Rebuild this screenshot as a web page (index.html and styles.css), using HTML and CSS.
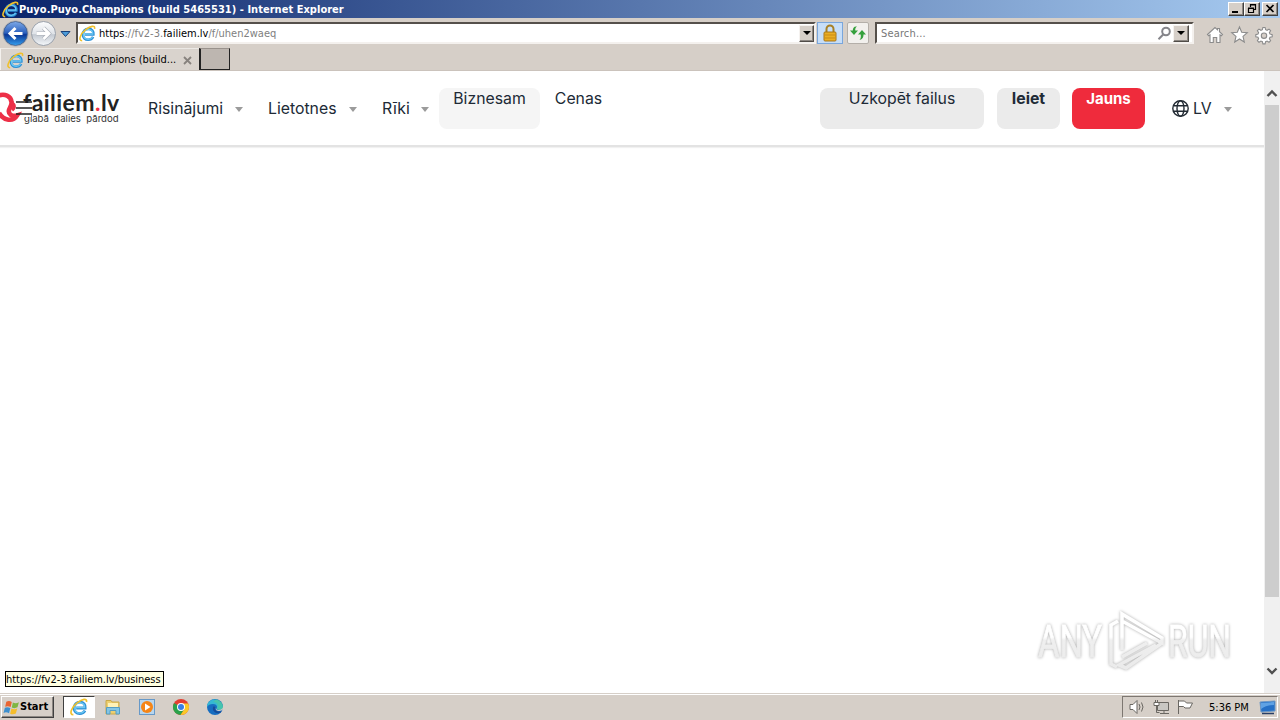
FILE: index.html
```html
<!DOCTYPE html>
<html lang="lv">
<head>
<meta charset="utf-8">
<title>Puyo.Puyo.Champions (build 5465531)</title>
<link rel="stylesheet" href="styles.css">
</head>
<body>
<svg class="defs" width="0" height="0">
  <linearGradient id="orb" x1="0" y1="0" x2="0" y2="1"><stop offset="0" stop-color="#7da9e8"/><stop offset=".48" stop-color="#2b60bd"/><stop offset=".55" stop-color="#0b3796"/><stop offset="1" stop-color="#35a0ef"/></linearGradient>
  <linearGradient id="orb2" x1="0" y1="0" x2="0" y2="1"><stop offset="0" stop-color="#fdfdfe"/><stop offset=".5" stop-color="#dfe3e8"/><stop offset=".55" stop-color="#c4cad2"/><stop offset="1" stop-color="#f5f8fb"/></linearGradient>
  <linearGradient id="mark" gradientUnits="userSpaceOnUse" x1="0" y1="6" x2="0" y2="60"><stop offset="0" stop-color="#fff"/><stop offset=".5" stop-color="#fff"/><stop offset=".56" stop-color="#efefef"/><stop offset="1" stop-color="#ebebeb"/></linearGradient>
  <symbol id="ie" viewBox="0 0 16 16">
    <path d="M13.300 11.200C12.300 13 10.600 13.900 8.600 13.900C5.600 13.900 3.700 11.900 3.700 9C3.700 5.800 5.900 3.700 8.900 3.700C12.200 3.700 13.900 5.900 13.500 8.900H5.500" fill="none" stroke="#2b8fd6" stroke-width="2.500"/>
    <path d="M12.800 11.500C11.800 13 10.400 13.500 8.600 13.500C6 13.500 4.200 11.600 4.200 9C4.200 6 6.300 4.100 8.900 4.100C11.700 4.100 13.200 6 13 8.500H5.500" fill="none" stroke="#6cc8f3" stroke-width="1.200"/>
    <path d="M3 14.800C-1 15 1 8.500 6.300 4.400C10.700 1 15.500-.3 14.600 3.600" fill="none" stroke="#f0c02c" stroke-width="1.500"/>
  </symbol>
</svg>
<div class="screen">
  <div class="titlebar">
    <svg class="ti" width="17" height="17"><use href="#ie"/></svg>
    <span class="title">Puyo.Puyo.Champions (build 5465531) - Internet Explorer</span>
    <div class="winbtns">
      <span class="wb"><svg width="14" height="12"><path d="M3 9h6" stroke="#000" stroke-width="2"/></svg></span>
      <span class="wb"><svg width="14" height="12"><path d="M5.500 4V1.500h5V6.500H9M5 2h6M3.500 5.500h5v4h-5zM3 5h6" fill="none" stroke="#000" stroke-width="1.200"/></svg></span>
      <span class="wb close"><svg width="14" height="12"><path d="M3.500 2l7 7M10.500 2l-7 7" stroke="#000" stroke-width="1.700"/></svg></span>
    </div>
  </div>

  <div class="toolbar">
    <svg class="orbs" width="75" height="30" viewBox="0 0 75 30">
      <circle cx="15.500" cy="15.500" r="12" fill="url(#orb)" stroke="#42618f"/>
      <circle cx="15.500" cy="15.500" r="12.800" fill="none" stroke="#aaa9ad" stroke-width=".7"/>
      <path d="M22.500 15.500H10.500M15.500 10L10 15.500l5.500 5.500" fill="none" stroke="#fff" stroke-width="3"/>
      <circle cx="43.500" cy="15.500" r="12" fill="url(#orb2)" stroke="#99a0aa"/>
      <path d="M36.500 15.500h12M43.500 10l5.500 5.500l-5.500 5.500" fill="none" stroke="#a9afb8" stroke-width="4"/>
      <path d="M36.500 15.500h12M43.500 10l5.500 5.500l-5.500 5.500" fill="none" stroke="#fff" stroke-width="2.800"/>
      <path d="M61 13.500h9l-4.500 5z" fill="#4b9bd8" stroke="#183f78"/>
    </svg>
    <div class="address">
      <svg width="17" height="17"><use href="#ie"/></svg>
      <span class="url"><b>https</b>://fv2-3.<b>failiem.lv</b>/f/uhen2waeq</span>
      <span class="drop"><i></i></span>
    </div>
    <div class="lock"><svg width="16" height="18"><path d="M4.500 9V5a3.500 3.500 0 0 1 7 0v4" fill="none" stroke="#a88025" stroke-width="2"/><rect x="2" y="8" width="12" height="9" rx="1" fill="#eaae25" stroke="#a8771b"/><path d="M3 11h10M3 14h10" stroke="#c98b17"/></svg></div>
    <div class="refresh"><svg width="18" height="16" fill="#35a03c"><path d="M8 1.500C5 1 3.800 3 3.800 5.500H1L5 10L9 5.500H6.300C6 4 6.500 2.500 8 1.500z"/><path d="M10.500 15C13.500 14.500 14.700 12 14.500 9.500H17L13 5L9 9.500H11.700C12 11.500 12 13.500 10.500 15z"/></svg></div>
    <div class="search">
      <span class="ph">Search...</span>
      <svg width="15" height="15" fill="none" stroke="#85858a" stroke-width="2"><circle cx="9" cy="5.500" r="3.800"/><path d="M6.200 8.500L1.500 13.200"/></svg>
      <span class="drop"><i></i></span>
    </div>
    <svg class="tools" width="68" height="20" fill="#fff" stroke="#8b8b8b" stroke-width="1.100">
      <path d="M1.500 9.500L9 2.500l2.500 2.300V3.500h2v3.200l3 2.800l-1.200 1.300l-1.300-1V17.500H10.700v-5H7.300v5H4V9.800l-1.300 1z"/>
      <path d="M33.500 2l2.200 5.200l5.600.5l-4.300 3.700l1.300 5.600l-4.800-3l-4.800 3l1.300-5.600l-4.300-3.700l5.600-.5z"/>
      <path d="M56.900 2.500h2.200l.5 2.200l1.500.6l1.900-1.200l1.600 1.600l-1.200 1.900l.6 1.500l2.200.5v2.200l-2.200.5l-.6 1.500l1.200 1.900l-1.600 1.600l-1.900-1.200l-1.500.6l-.5 2.200h-2.200l-.5-2.200l-1.500-.6l-1.900 1.200l-1.600-1.600l1.200-1.900l-.6-1.500l-2.200-.5V9.600l2.200-.5l.6-1.500l-1.200-1.900l1.600-1.600l1.900 1.200l1.500-.6z"/><circle cx="58" cy="10.700" r="2.700" fill="#d6cfc8"/>
    </svg>
  </div>

  <div class="tabs">
    <div class="tab"><svg width="17" height="17"><use href="#ie"/></svg><span class="tabname">Puyo.Puyo.Champions (build...</span><svg class="x" width="9" height="9"><path d="M1 1l7 7M8 1L1 8" stroke="#87827e" stroke-width="1.800"/></svg></div>
    <div class="newtab"></div>
  </div>

  <div class="viewport">
    <div class="page">
      <header class="site">
        <div class="logo">
          <svg class="infinity" width="38" height="34" viewBox="0 0 38 34" fill="none"><path d="M16 12h15v14H16z" fill="#fff"/><path d="M-3 5C5 2 11 5 11.500 11C12 14 10 16 9 19C8 23 12 26 17 24.500C13 31 4 30-1 22" stroke="#ed2f47" stroke-width="4.600"/><path d="M11 12C15 13 15 17 12 19" stroke="#ed2f47" stroke-width="3.500"/><path d="M16 11H32M16 17H32M16 23H32" stroke="#222" stroke-width="1.700"/></svg>
          <div class="brand"><span class="name">failiem<em>.</em>lv</span><span class="tag">glabā&nbsp; dalies&nbsp; pārdod</span></div>
        </div>
        <nav class="nav">
          <a class="item i1"><span>Risinājumi</span><i class="car"></i></a>
          <a class="item i2"><span>Lietotnes</span><i class="car"></i></a>
          <a class="item i3"><span>Rīki</span><i class="car"></i></a>
          <a class="btn biz">Biznesam</a>
          <a class="btn cen">Cenas</a>
        </nav>
        <div class="actions">
          <a class="btn up">Uzkopēt failus</a>
          <a class="btn login">Ieiet</a>
          <a class="btn join">Jauns</a>
          <a class="item lang"><svg width="18" height="18" fill="none" stroke="#222a33" stroke-width="1.400"><circle cx="9.500" cy="8.500" r="7.700"/><ellipse cx="9.500" cy="8.500" rx="3.500" ry="7.700"/><path d="M2.500 5.800h14M2.500 11.200h14"/></svg><span>LV</span><i class="car"></i></a>
        </div>
      </header>
      <svg class="watermark" width="210" height="72" viewBox="0 0 210 72">
        <text x="4" y="53" textLength="64" lengthAdjust="spacingAndGlyphs">ANY</text>
        <text x="134" y="53" textLength="63" lengthAdjust="spacingAndGlyphs">RUN</text>
        <path d="M84 17L77 21V60L83 63M88 46V10L128 34V39L88 17M128 39L92 64L85 61L122 41M88 53L113 39" fill="none" stroke="url(#mark)" stroke-width="3.600"/>
      </svg>
      <div class="status">https://fv2-3.failiem.lv/business</div>
    </div>
    <div class="scroll">
      <svg width="16" height="34"><path d="M3.500 25L8 20.500L12.500 25" fill="none" stroke="#505050" stroke-width="2.400"/></svg>
      <div class="thumb"></div>
      <svg class="down" width="16" height="34"><path d="M3.500 9.500L8 14L12.500 9.500" fill="none" stroke="#505050" stroke-width="2.400"/></svg>
    </div>
  </div>

  <div class="taskbar">
    <div class="start"><svg width="17" height="17" viewBox="0 0 15.500 15.500"><path d="M3 2.500Q5.500 1 8 2.700L7 7.300Q4.500 6 2 7z" fill="#e96532"/><path d="M9 3.200Q11.500 4.500 14.500 3L13.200 7.600Q10.500 9 8 7.700z" fill="#7fb642"/><path d="M1.700 8Q4 7 6.700 8.300L5.500 13Q3 11.500.5 12.700z" fill="#3d8fce"/><path d="M7.700 8.700Q10.500 10 13 8.600L11.700 13.300Q9 14.500 6.500 13.500z" fill="#f5bd2b"/></svg><span>Start</span></div>
    <div class="apps">
      <span class="active"><svg width="18" height="18"><use href="#ie"/></svg></span>
      <svg width="18" height="18"><path d="M2 2.500h5l1 1.500h7v12H2z" fill="#edcf70" stroke="#c9a849"/><path d="M4 5h10v4H4z" fill="#fff2b7"/><path d="M2.500 16V9.500h13V16h-3.500v-3.500h-6V16z" fill="#83c5e5" stroke="#549dc4"/></svg>
      <svg width="18" height="18"><rect x="1.500" y="1.500" width="15" height="15" fill="#b8d6ee" stroke="#6799c8"/><circle cx="9" cy="9" r="6" fill="#f58517"/><path d="M7 5.500l5.500 3.500L7 12.500z" fill="#fff"/></svg>
      <svg width="18" height="18"><circle cx="9" cy="9" r="8" fill="#e33e31"/><path d="M9 9L2 5A8 8 0 0 0 8.500 17L12.500 11z" fill="#2aa24b"/><path d="M9 5.500h7.200A8 8 0 0 1 8.500 17L12.500 11z" fill="#fbc928"/><circle cx="9" cy="9" r="4" fill="#fff"/><circle cx="9" cy="9" r="3" fill="#397fe5"/></svg>
      <svg width="18" height="18"><circle cx="9" cy="9" r="8" fill="#176dc0"/><path d="M1 9C1-1 16-1 17 9C17 12 12 13 10.500 10.500C12 8 10 6 7 6C4 6 2 7 1 9z" fill="#35b8d4"/><path d="M9.500 10C8.500 13 12 14.500 16 13C15.500 13.800 15 14.500 14 15C8 16 5 11 8 8z" fill="#164c99"/><path d="M9.700 10Q9.500 13 13 13Q15.500 13 17.500 11V12L15.500 14Q17 14 18 13V9H17Q16 12 12 12Q10.500 12 9.700 10z" fill="#d6cfc8"/><path d="M10 1.500C14 2 17 5 17 9C17 12 12 12.500 11 10.700C13 7 11 4 7 4z" fill="#58cf88" opacity=".5"/></svg>
    </div>
    <div class="tray">
      <svg width="68" height="18" fill="#fff" stroke="#6a6762">
        <path d="M2 6.500h3l4-4v13l-4-4H2z"/><path d="M11 6q2 3 0 6M13.500 4.500q3 4.500 0 9" fill="none"/>
        <path d="M29.500 4.500h11v8h-11z" fill="#c9c7c3"/><path d="M32 15.500h9M36 13v2M28.500 5v9.500h3" fill="none"/><path d="M26 4.500h5v3h-5zM27.500 2v2M29.500 2v2"/>
        <path d="M50.500 2v14M50.500 3h6l2 2h6l-2.500 5h-5l-1.500-1.500h-5"/>
      </svg>
      <span class="clock">5:36 PM</span>
      <svg class="desk" width="17" height="15"><path d="M1 2L16 1V11L2 12z" fill="#2570c6" stroke="#6d98c5"/><path d="M2 3L15 2V5Q7 5 2 9z" fill="#5fa2e4"/><path d="M3 13.500h12" stroke="#273e65" stroke-width="1.500"/></svg>
    </div>
  </div>
</div>
</body>
</html>
```
FILE: styles.css
```css
* { box-sizing: border-box; }
body { margin: 0; overflow: hidden; background: #fff; }
svg { display: block; flex: none; }
.defs { position: absolute; }
.screen { width: 1280px; height: 720px; display: flex; flex-direction: column; background: #d6cfc8; font: 11px/14px "DejaVu Sans Condensed", "DejaVu Sans", sans-serif; color: #000; white-space: nowrap; }
.titlebar { height: 18px; flex: none; display: flex; align-items: center; padding: 0 2px; background: linear-gradient(90deg, #0a246a, #a6caf0); color: #fff; }
.title { font-weight: bold; letter-spacing: .03px; padding-top: 1px; }
.winbtns { margin-left: auto; display: flex; }
.wb { width: 16px; height: 14px; background: #d6cfc8; border: 1px solid; border-color: #fff #404040 #404040 #fff; box-shadow: inset -1px -1px #8c8782; }
.close { margin-left: 2px; }
.toolbar { height: 30px; flex: none; display: flex; align-items: center; }
.orbs { margin-right: 1px; }
.address, .search { height: 22px; background: #fff; border: 2px solid; border-color: #55504b #f4f1ee #f4f1ee #55504b; display: flex; align-items: center; }
.address { width: 740px; padding-left: 1px; }
.url { margin-left: 3px; padding-top: 2px; color: #808080; }
.url b { font-weight: normal; color: #000; }
.drop { width: 15px; height: 17px; margin-left: auto; background: #d6cfc8; border: 1px solid; border-color: #f5f2ef #504c48 #504c48 #f5f2ef; box-shadow: inset -1px -1px #8c8782; display: flex; align-items: center; justify-content: center; }
.drop i { border: 4px solid transparent; border-bottom: 0; border-top-color: #000; }
.lock { width: 26px; height: 22px; margin-left: 1px; border: 1px solid #79a6dc; background: #c7def8; display: flex; justify-content: center; align-items: center; }
.refresh { width: 22px; height: 22px; margin-left: 4px; border: 1px solid #b4afa9; border-radius: 2px; background: #f2f0ed; display: flex; align-items: center; justify-content: center; }
.search { width: 319px; margin-left: 6px; padding: 0 3px 0 4px; }
.ph { color: #777; margin-right: auto; padding-top: 2px; letter-spacing: .15px; }
.search .drop { margin-left: 1px; width: 16px; }
.tools { margin-left: 12px; margin-top: 3px; }
.tabs { height: 23px; flex: none; display: flex; border-bottom: 1px solid #cbc3bc; }
.tab { width: 199px; display: flex; align-items: center; padding-left: 6px; padding-top: 1px; border-top: 1px solid #ece9e5; border-left: 1px solid #f4f1ee; background: #d9d3cd; }
.tabname { width: 150px; margin-left: 3px; letter-spacing: -.03px; }
.x { margin-left: 6px; }
.newtab { width: 31px; height: 22px; background: #bdb6b0; border: 1px solid; border-color: #99928c #222 #222 #222; border-left-width: 2px; }
.viewport { height: 622px; flex: none; display: flex; }
.page { width: 1264px; background: #fff; position: relative; overflow: hidden; }
.site { height: 76px; border-bottom: 2px solid #e3e3e3; box-shadow: 0 1px 1px #f1f1f1; display: flex; align-items: flex-start; padding-top: 17px; color: #202a36; font: 15.800px/22px "Inter", sans-serif; }
.logo { width: 131px; height: 41px; position: relative; }
.infinity { position: absolute; left: 0; top: 3px; z-index: 1; }
.brand { display: flex; flex-direction: column; padding-left: 23px; padding-top: 3px; }
.name { font: bold 23px/22px Lato, sans-serif; color: #222; letter-spacing: .45px; }
.name em { color: #ed2f47; font-style: normal; }
.tag { font: 9.600px/10px Inter, sans-serif; color: #333; padding-left: 1px; margin-top: 1px; }
.nav { display: flex; }
.item { height: 41px; display: flex; align-items: center; justify-content: space-between; }
.i1 { width: 96px; margin-left: 17px; }
.i2 { width: 90px; margin-left: 24px; }
.i3 { width: 47px; margin-left: 24px; }
.car { border: 4.500px solid transparent; border-bottom: 0; border-top: 5px solid #9b9b9b; margin-top: 2px; margin-right: 1px; }
.i3 .car { margin-right: 0; }
.btn { height: 41px; border-radius: 8px; text-align: center; }
.biz { width: 101px; margin-left: 10px; background: #f5f5f5; }
.cen { width: 77px; }
.actions { display: flex; margin-left: auto; padding-right: 31px; }
.up { width: 164px; background: #ebebeb; }
.login { width: 63px; margin-left: 13px; background: #ebebeb; font-weight: bold; }
.join { width: 73px; margin-left: 12px; background: #ef2b3c; color: #fff; font-weight: bold; font-size: 15px; }
.lang { width: 62px; margin-left: 26px; }
.lang span { width: 31px; padding-left: 2px; }
.watermark { position: absolute; left: 1034px; top: 533px; filter: drop-shadow(0 0 1.500px #aaa); }
.watermark text { font: 45px "Roboto", sans-serif; fill: url(#mark); stroke: url(#mark); stroke-width: .8px; }
.status { position: absolute; left: 5px; top: 600px; height: 16px; width: 159px; padding-top: 1px; border: 1px solid #000; background: #ffffe1; letter-spacing: -.04px; }
.scroll { width: 16px; background: #f0f0f0; display: flex; flex-direction: column; align-items: center; }
.thumb { width: 14px; height: 492px; background: #cdcdcd; }
.down { margin-top: auto; }
.taskbar { height: 27px; flex: none; display: flex; border-top: 1px solid #d6cfc8; box-shadow: inset 0 1px #fff; padding-top: 2px; }
.start { width: 53px; height: 22px; margin-left: 1px; display: flex; align-items: center; padding-left: 1px; border: 1px solid; border-color: #fff #404040 #404040 #fff; box-shadow: inset -1px -1px #8c8782; font-weight: bold; }
.apps { display: flex; align-items: center; gap: 16px; margin-left: 9px; height: 22px; }
.active { width: 32px; height: 22px; margin-right: -7px; display: flex; align-items: center; justify-content: center; background: #fff; border: 1px solid; border-color: #404040 #fff #fff #404040; }
.tray { width: 156px; height: 22px; margin-left: auto; margin-right: 2px; display: flex; align-items: center; padding-left: 5px; border: 1px solid; border-color: #7d7771 #fff #fff #7d7771; }
.clock { margin-left: 13px; width: 40px; padding-top: 1px; }
.desk { margin-left: auto; margin-right: 1px; }
```
